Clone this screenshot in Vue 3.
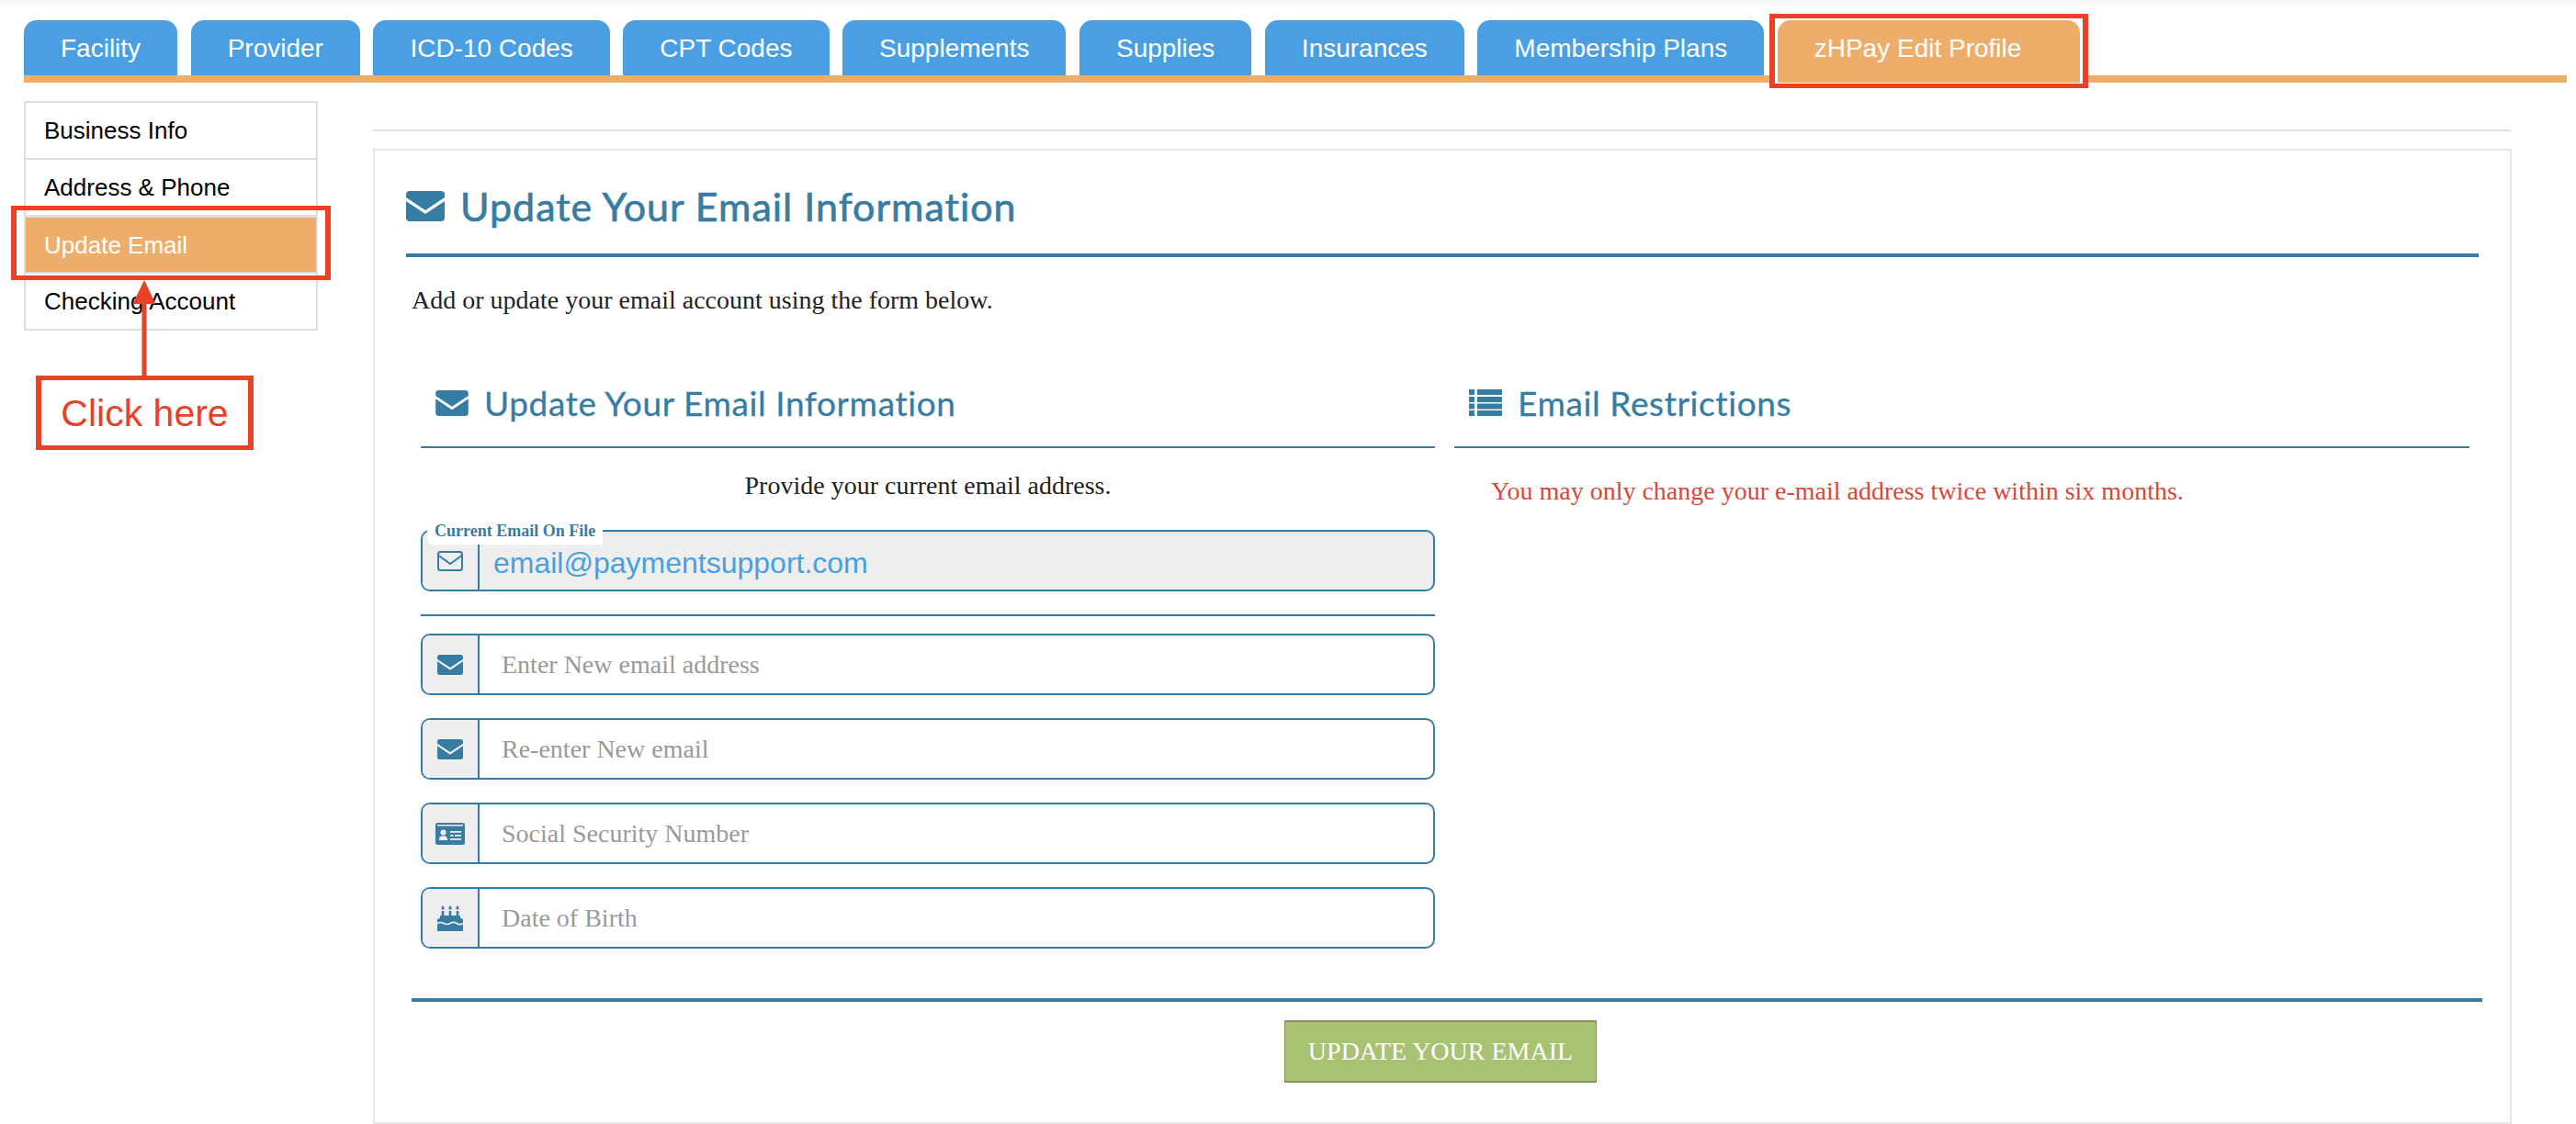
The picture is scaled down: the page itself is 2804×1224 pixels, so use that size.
<script setup>
const tabs = ['Facility', 'Provider', 'ICD-10 Codes', 'CPT Codes', 'Supplements', 'Supplies', 'Insurances', 'Membership Plans']
const side = ['Business Info', 'Address & Phone', 'Update Email', 'Checking Account']
const fields = [
  { ph: 'Enter New email address', icon: 'mail' },
  { ph: 'Re-enter New email', icon: 'mail' },
  { ph: 'Social Security Number', icon: 'id' },
  { ph: 'Date of Birth', icon: 'cake' }
]
</script>

<template>
  <div class="page">
    <nav class="tabs">
      <a v-for="t in tabs" :key="t" class="tab">{{ t }}</a>
      <div class="tab-active-wrap">
        <a class="tab active">zHPay Edit Profile</a>
        <span class="mark mark-tab"></span>
      </div>
    </nav>

    <div class="body">
      <aside class="side">
        <ul class="side-list">
          <li v-for="s in side" :key="s" class="side-item" :class="{ on: s === 'Update Email' }">{{ s }}</li>
        </ul>
        <span class="mark mark-side"></span>
        <svg class="arrow" viewBox="0 0 30 105" width="30" height="105">
          <path d="M15 0 L27.500 26 L17.500 26 V105 H12.500 V26 L2.500 26 Z" fill="#ea4025" />
        </svg>
        <div class="callout">Click here</div>
      </aside>

      <main class="main">
        <hr class="top-rule" />
        <section class="card">
          <h1 class="title">
            <svg class="i-title" viewBox="0 0 42 33"><path d="M4 0H38a4 4 0 0 1 4 4v3L21 21 0 7V4a4 4 0 0 1 4-4z" /><path d="M0 11 21 25 42 11V29a4 4 0 0 1-4 4H4a4 4 0 0 1-4-4z" /></svg>
            Update Your Email Information
          </h1>
          <p class="intro">Add or update your email account using the form below.</p>

          <div class="cols">
            <div class="col">
              <h2 class="head">
                <svg class="i-head" viewBox="0 0 42 33"><path d="M4 0H38a4 4 0 0 1 4 4v3L21 21 0 7V4a4 4 0 0 1 4-4z" /><path d="M0 11 21 25 42 11V29a4 4 0 0 1-4 4H4a4 4 0 0 1-4-4z" /></svg>
                Update Your Email Information
              </h2>
              <p class="provide">Provide your current email address.</p>

              <div class="field current">
                <span class="legend">Current Email On File</span>
                <span class="addon">
                  <svg class="i-field" viewBox="0 0 28 22"><rect x="1" y="1" width="26" height="20" rx="2.500" fill="none" stroke="#377ca3" stroke-width="2" /><path d="M1.500 5 14 14 26.500 5" fill="none" stroke="#377ca3" stroke-width="2" /></svg>
                </span>
                <input class="input filled" value="email@paymentsupport.com" readonly />
              </div>

              <hr class="mid-rule" />

              <div class="stack">
                <div v-for="f in fields" :key="f.ph" class="field">
                  <span class="addon">
                    <svg v-if="f.icon === 'mail'" class="i-field" viewBox="0 0 42 33"><path d="M4 0H38a4 4 0 0 1 4 4v3L21 21 0 7V4a4 4 0 0 1 4-4z" /><path d="M0 11 21 25 42 11V29a4 4 0 0 1-4 4H4a4 4 0 0 1-4-4z" /></svg>
                    <svg v-else-if="f.icon === 'id'" class="i-id" viewBox="0 0 32 24">
                      <path fill-rule="evenodd" d="M2.500 0h27A2.500 2.500 0 0 1 32 2.500v19a2.500 2.500 0 0 1-2.500 2.500h-27A2.500 2.500 0 0 1 0 21.500v-19A2.500 2.500 0 0 1 2.500 0zM2 2.500V3.500H30V2.500a.5.5 0 0 0-.5-.5h-27a.5.5 0 0 0-.5.5z" />
                      <circle cx="8.500" cy="10.500" r="3" fill="#eef0f1" />
                      <path d="M3.800 19c0-3.500 2-4.800 4.700-4.800s4.700 1.300 4.700 4.800z" fill="#eef0f1" />
                      <path d="M16 9h12v1.800H16zM21 13h7v1.800h-7zM16 13h3.500v1.800H16zM16 17h12v1.800H16z" fill="#eef0f1" />
                    </svg>
                    <svg v-else class="i-field-cake" viewBox="0 0 28 28">
                      <path d="M6 0c1 1.500 1.600 2.200 1.600 3.100S7 4.600 6 4.600 4.400 3.900 4.400 3.100 5 1.500 6 0zM14 0c1 1.500 1.600 2.200 1.600 3.100s-.6 1.500-1.600 1.500-1.600-.7-1.600-1.500S13 1.500 14 0zM22 0c1 1.500 1.600 2.200 1.600 3.100s-.6 1.500-1.600 1.500-1.600-.7-1.600-1.500S21 1.500 22 0z" />
                      <path d="M4.700 6h2.600v6H4.700zM12.700 6h2.600v6h-2.600zM20.700 6h2.600v6h-2.600z" />
                      <path d="M3 11h22v3H3z" />
                      <path d="M2 14h24a2 2 0 0 1 2 2v12H0V16a2 2 0 0 1 2-2z" />
                      <path d="M0 19.500c2.300-1.400 4.500-1.400 7 0s4.700 1.400 7 0 4.700-1.400 7 0 4.700 1.400 7 0" fill="none" stroke="#eee" stroke-width="1.600" />
                    </svg>
                  </span>
                  <input class="input" :placeholder="f.ph" />
                </div>
              </div>
            </div>

            <div class="col">
              <h2 class="head">
                <svg class="i-list" viewBox="0 0 36 29">
                  <path d="M0 0h6v6H0zM9 0h27v6H9zM0 8h6v6H0zM9 8h27v6H9zM0 15.500h6v6H0zM9 15.500h27v6H9zM0 23h6v6H0zM9 23h27v6H9z" />
                </svg>
                Email Restrictions
              </h2>
              <p class="warn">You may only change your e-mail address twice within six months.</p>
            </div>
          </div>

          <hr class="bottom-rule" />
          <div class="actions">
            <button class="submit" type="button">UPDATE YOUR EMAIL</button>
          </div>
        </section>
      </main>
    </div>
  </div>
</template>

<style scoped>
.page {
  width: 2804px;
  height: 1224px;
  box-sizing: border-box;
  padding-top: 22px;
  background: linear-gradient(#f6f6f6 0, #fff 9px);
  font-family: "Liberation Sans", Arial, sans-serif;
  overflow: hidden;
}
.tabs {
  display: flex;
  gap: 14.500px;
  margin-left: 26px;
  width: 2768px;
  height: 68px;
  box-sizing: border-box;
  border-bottom: 8px solid #edad6b;
}
.tab {
  display: block;
  height: 60px;
  box-sizing: border-box;
  padding: 1px 40px 0;
  line-height: 60px;
  font-size: 28px;
  color: #fff;
  background: #4a9fe3;
  border-radius: 14px 14px 0 0;
  white-space: nowrap;
}
.tab-active-wrap {
  position: relative;
  height: 69px;
  margin-left: -3px;
  background: #fff;
  padding: 0 3px 1px;
}
.tab.active {
  height: 68px;
  padding-right: 64px;
  background: #edad6b;
}
.mark {
  position: absolute;
  border: 6px solid #ea4025;
  box-sizing: border-box;
}
.mark-tab {
  left: -6px;
  right: -6px;
  top: -7px;
  height: 81px;
  border-width: 5px 6px;
}
.body {
  display: grid;
  grid-template-columns: 320px 2328px;
  column-gap: 60px;
  margin-left: 26px;
  padding-top: 20px;
}
.side {
  position: relative;
}
.side-list {
  list-style: none;
  margin: 0;
  padding: 0;
  border: 2px solid #ddd;
  border-bottom-width: 0;
}
.side-item {
  height: 62px;
  box-sizing: border-box;
  padding-left: 20px;
  line-height: 60px;
  font-size: 26px;
  color: #000;
  border-bottom: 2px solid #ddd;
}
.side-item.on {
  color: #fff;
  background: #edad6b;
  border-top: 2px solid #ddd;
  margin-top: -1px;
  height: 63px;
}
.mark-side {
  left: -14px;
  top: 114px;
  width: 348px;
  height: 81px;
  border-width: 5px 6px;
}
.arrow {
  position: absolute;
  left: 116px;
  top: 195px;
}
.callout {
  position: absolute;
  left: 13px;
  top: 299px;
  width: 237px;
  height: 81px;
  box-sizing: border-box;
  border: 5px solid #ea4025;
  border-left-width: 6px;
  border-right-width: 6px;
  color: #ea4025;
  background: #fff;
  font-size: 41px;
  line-height: 73px;
  text-align: center;
}
.main {
  padding-top: 31px;
}
.top-rule {
  margin: 0 0 19px;
  border: 0;
  height: 2px;
  background: #dde1e5;
}
.card {
  height: 1062px;
  box-sizing: border-box;
  border: 2px solid #e4e6e8;
  padding: 0 34px;
  font-family: "Liberation Serif", "Times New Roman", serif;
}
.title {
  display: flex;
  align-items: center;
  gap: 17px;
  height: 116px;
  margin: 0;
  padding-top: 9px;
  box-sizing: border-box;
  border-bottom: 4px solid #377ca3;
  font-family: Lato, sans-serif;
  font-weight: 400;
  font-size: 43px;
  letter-spacing: 1px;
  color: #377ca3;
  -webkit-text-stroke: 0.700px #377ca3;
  white-space: nowrap;
}
.i-title {
  width: 42px;
  height: 33px;
  fill: #377ca3;
}
.intro {
  margin: 29px 0 0 6px;
  font-size: 28px;
  line-height: 36px;
  color: #222;
}
.cols {
  display: grid;
  grid-template-columns: 1104px 1105px;
  column-gap: 21px;
  margin: 60px 0 0 16px;
}
.head {
  display: flex;
  align-items: center;
  height: 83px;
  margin: 0;
  padding: 0 0 14px 16px;
  box-sizing: border-box;
  border-bottom: 2px solid #377ca3;
  font-family: Lato, sans-serif;
  font-weight: 400;
  font-size: 37px;
  letter-spacing: 0.600px;
  color: #377ca3;
  -webkit-text-stroke: 0.300px #377ca3;
  white-space: nowrap;
}
.i-head {
  width: 36px;
  height: 28px;
  margin-right: 17px;
  fill: #377ca3;
}
.i-list {
  width: 36px;
  height: 29px;
  margin-right: 17px;
  fill: #377ca3;
}
.provide {
  margin: 23px 0 0;
  text-align: center;
  font-size: 28px;
  line-height: 36px;
  color: #222;
}
.warn {
  margin: 29px 0 0 40px;
  font-size: 28px;
  line-height: 36px;
  color: #d4493a;
}
.field {
  position: relative;
  display: flex;
  height: 67px;
  box-sizing: border-box;
  border: 2px solid #377ca3;
  border-radius: 10px;
  overflow: visible;
}
.current {
  margin-top: 30px;
  background: #eee;
}
.addon {
  display: flex;
  align-items: center;
  justify-content: center;
  flex: none;
  width: 62px;
  box-sizing: border-box;
  background: #eee;
  border-right: 2px solid #377ca3;
  border-radius: 8px 0 0 8px;
}
.i-field {
  width: 28px;
  height: 22px;
  fill: #377ca3;
}
.i-id {
  width: 32px;
  height: 24px;
  fill: #377ca3;
}
.i-field-cake {
  width: 28px;
  height: 28px;
  fill: #377ca3;
}
.input {
  flex: 1;
  min-width: 0;
  border: 0;
  outline: 0;
  padding: 0 0 0 24px;
  background: transparent;
  box-shadow: inset 0 2px 2px rgba(0, 0, 0, 0.04);
  font-family: "Liberation Serif", "Times New Roman", serif;
  font-size: 28px;
  color: #555;
  border-radius: 0 8px 8px 0;
}
.input::placeholder {
  color: #999;
  opacity: 1;
}
.input.filled {
  padding: 5px 0 0 15px;
  font-family: "Liberation Sans", Arial, sans-serif;
  font-size: 32px;
  color: #4aa0dc;
}
.legend {
  position: absolute;
  left: 5px;
  top: -12px;
  z-index: 1;
  padding: 0 8px;
  height: 26px;
  line-height: 22px;
  background: #fff;
  border-radius: 0 0 0 6px;
  font-size: 18px;
  font-weight: 700;
  color: #377ca3;
}
.mid-rule {
  margin: 25px 0 19px;
  border: 0;
  height: 2px;
  background: #377ca3;
}
.stack {
  display: flex;
  flex-direction: column;
  gap: 25px;
}
.bottom-rule {
  margin: 54px 0 20px 6px;
  width: 2254px;
  border: 0;
  height: 4px;
  background: #377ca3;
}
.actions {
  display: flex;
  justify-content: center;
  padding-right: 4px;
}
.submit {
  width: 340px;
  height: 68px;
  border: 1px solid #84955a;
  border-top-width: 2px;
  border-bottom-width: 2px;
  background: #a8c172;
  color: #fff;
  font-family: "Liberation Serif", "Times New Roman", serif;
  font-size: 28px;
  padding: 0;
}
</style>
<style>
html, body { margin: 0; overflow: hidden; background: #fff; }
</style>
